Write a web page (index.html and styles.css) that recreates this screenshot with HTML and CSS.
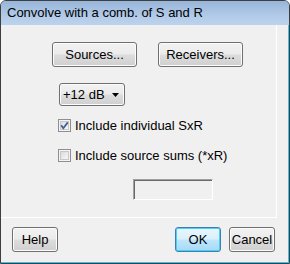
FILE: index.html
```html
<!DOCTYPE html>
<html>
<head>
<meta charset="utf-8">
<link rel="stylesheet" href="styles.css">
</head>
<body>
<div class="window">
  <div class="titlebar">Convolve with a comb. of S and R</div>
  <div class="client">
    <div class="panel">
      <div class="btnrow">
        <button class="btn wide">Sources...</button>
        <button class="btn wide">Receivers...</button>
      </div>
      <div class="select">
        <span class="select-text">+12 dB</span>
        <svg class="arrow" width="7" height="4" viewBox="0 0 7 4"><path d="M0 0H7L3.5 4Z" fill="#000"/></svg>
      </div>
      <label class="check first">
        <svg class="box" width="13" height="13" viewBox="0 0 13 13">
          <defs><linearGradient id="g1" x1="0" y1="0" x2="1" y2="1"><stop offset="0" stop-color="#d8d8d8"/><stop offset="1" stop-color="#fbfbfb"/></linearGradient></defs>
          <rect x="0.5" y="0.5" width="12" height="12" fill="#f4f4f4" stroke="#8e8f8f"/>
          <rect x="2.5" y="2.5" width="8" height="8" fill="url(#g1)" stroke="#c8c8c8"/>
          <path d="M3.2 6.3L5.3 9.2L9.8 3.4" fill="none" stroke="#4a5f97" stroke-width="1.8"/>
        </svg>
        <span>Include individual SxR</span>
      </label>
      <label class="check second">
        <svg class="box" width="13" height="13" viewBox="0 0 13 13">
          <defs><linearGradient id="g2" x1="0" y1="0" x2="1" y2="1"><stop offset="0" stop-color="#d8d8d8"/><stop offset="1" stop-color="#fbfbfb"/></linearGradient></defs>
          <rect x="0.5" y="0.5" width="12" height="12" fill="#f4f4f4" stroke="#8e8f8f"/>
          <rect x="2.5" y="2.5" width="8" height="8" fill="url(#g2)" stroke="#c8c8c8"/>
        </svg>
        <span>Include source sums (*xR)</span>
      </label>
      <div class="field"></div>
    </div>
    <div class="footer">
      <button class="btn small">Help</button>
      <div class="spacer"></div>
      <button class="btn small default">OK</button>
      <button class="btn small">Cancel</button>
    </div>
  </div>
</div>
</body>
</html>
```
FILE: styles.css
```css
html, body {
  margin: 0;
  padding: 0;
  background: #ffffff;
}
body {
  font-family: "Liberation Sans", Arial, sans-serif;
  font-size: 13px;
  color: #000;
}
.window {
  width: 290px;
  height: 264px;
  box-sizing: border-box;
  border: 1px solid #3e3e3e;
  border-radius: 6px 6px 0 0;
  background: #c4d8ee;
  display: flex;
  flex-direction: column;
  overflow: hidden;
}
.titlebar {
  height: 24px;
  flex: none;
  box-sizing: border-box;
  padding: 4px 0 0 6px;
  font-size: 13px;
  line-height: 16px;
  background: linear-gradient(#97b5d9, #b1cae8 60%, #bcd3ed);
  color: #000;
}
.client {
  flex: 1;
  background: #f0f0f0;
  border-right: 1px solid #39c3ee;
  border-bottom: 1px solid #39c3ee;
  display: flex;
  flex-direction: column;
}
.panel {
  width: 276px;
  height: 193px;
  box-sizing: border-box;
  border-right: 1px solid #ffffff;
  border-bottom: 1px solid #ffffff;
  padding-top: 17px;
  display: flex;
  flex-direction: column;
  align-items: flex-start;
}
.btnrow {
  display: flex;
  gap: 21px;
  padding-left: 51px;
}
.btn {
  font-family: "Liberation Sans", Arial, sans-serif;
  font-size: 13px;
  color: #000;
  height: 25px;
  box-sizing: border-box;
  padding: 0;
  border: 1px solid #707070;
  border-radius: 3px;
  background: linear-gradient(#f2f2f2 0%, #ebebeb 48%, #dddddd 52%, #cfcfcf 100%);
  box-shadow: inset 0 0 0 1px #fcfcfc;
}
.wide {
  width: 85px;
}
.small {
  width: 46px;
}
.default {
  border-color: #3c7fb1;
  background: linear-gradient(#eaf6fd 0%, #d9f0fc 48%, #bee6fd 52%, #a7d9f5 100%);
  box-shadow: inset 0 0 0 1px #48d0f7;
}
.select {
  margin: 16px 0 0 58px;
  width: 66px;
  height: 23px;
  box-sizing: border-box;
  border: 1px solid #707070;
  border-radius: 3px;
  background: linear-gradient(#f2f2f2 0%, #ebebeb 48%, #dddddd 52%, #cfcfcf 100%);
  box-shadow: inset 0 0 0 1px #fcfcfc;
  display: flex;
  align-items: center;
  padding: 0 0 0 3px;
}
.select-text {
  flex: 1;
}
.arrow {
  margin-right: 5px;
  margin-top: 1px;
}
.check {
  display: flex;
  align-items: center;
  height: 17px;
  margin-left: 57px;
  gap: 4px;
}
.check.first {
  margin-top: 11px;
}
.check.second {
  margin-top: 13px;
}
.box {
  flex: none;
}
.field {
  margin: 15px 0 0 132px;
  width: 80px;
  height: 21px;
  box-sizing: border-box;
  border-top: 1px solid #a0a0a0;
  border-left: 1px solid #a0a0a0;
  border-right: 1px solid #ffffff;
  border-bottom: 1px solid #ffffff;
  box-shadow: inset 1px 1px 0 #696969;
  background: #f0f0f0;
}
.footer {
  display: flex;
  padding: 9px 13px 0 11px;
  gap: 8px;
}
.spacer {
  flex: 1;
}
```
